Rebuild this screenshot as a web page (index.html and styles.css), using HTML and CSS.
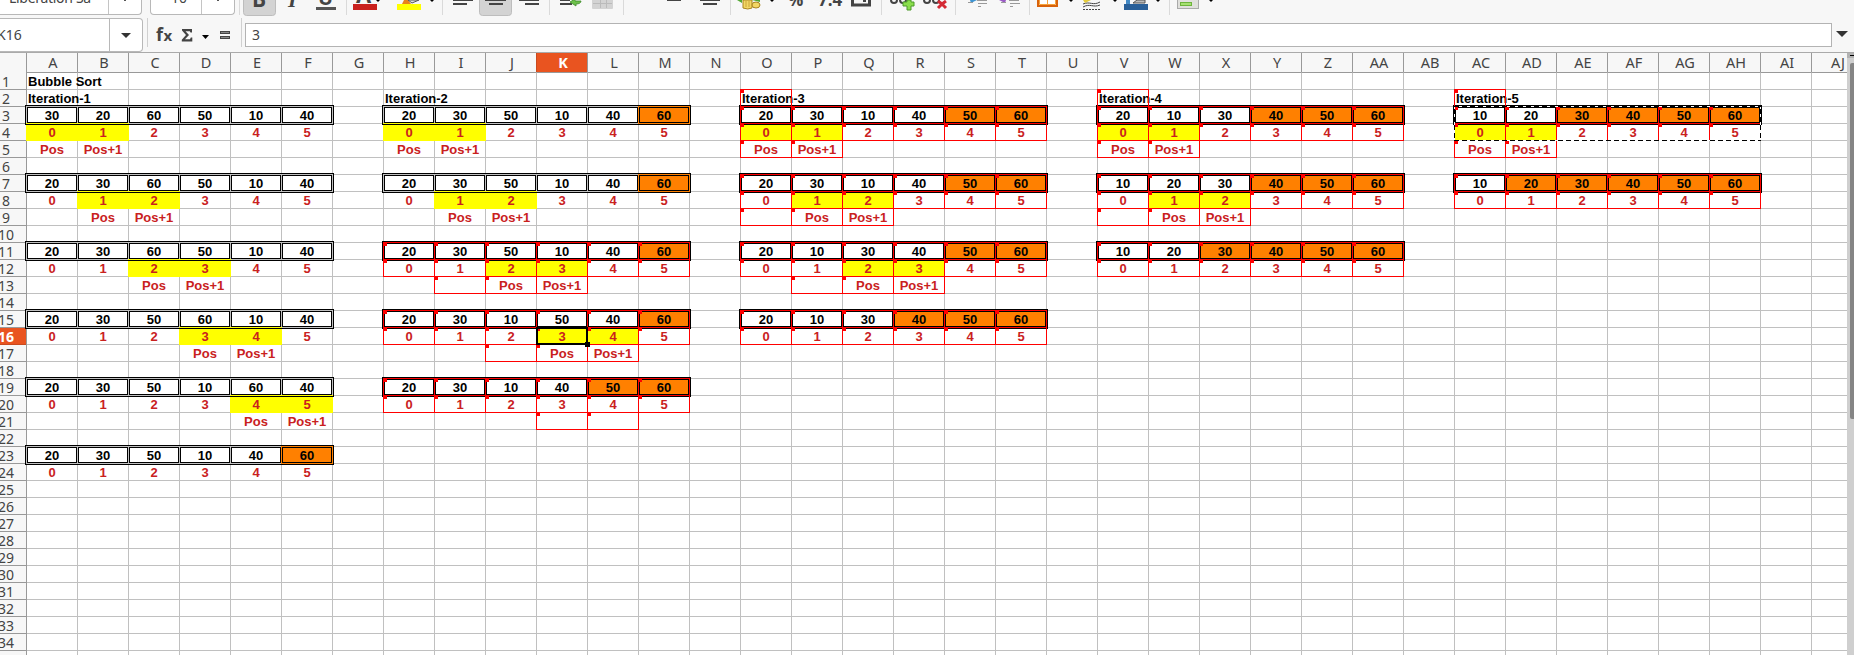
FILE: index.html
```html
<!DOCTYPE html>
<html lang="en">
<head>
<meta charset="utf-8">
<title>Bubble Sort</title>
<link rel="stylesheet" href="styles.css">
</head>
<body>
<div class="app">
  <div class="toolbar">
    <div class="combo combo-font"><span class="combo-text">Liberation Sa</span><span class="combo-arrow"></span></div>
    <div class="combo combo-size"><span class="combo-text">10</span><span class="combo-arrow"></span></div>
    <svg class="tools" width="1615" height="16" viewBox="239 0 1615 16">
      <g fill="#dadada">
        <rect x="239" y="0" width="1" height="15"/><rect x="346" y="0" width="1" height="15"/><rect x="442" y="0" width="1" height="15"/><rect x="549" y="0" width="1" height="15"/><rect x="623" y="0" width="1" height="15"/><rect x="730" y="0" width="1" height="15"/><rect x="881" y="0" width="1" height="15"/><rect x="955" y="0" width="1" height="15"/><rect x="1029" y="0" width="1" height="15"/><rect x="1169" y="0" width="1" height="15"/>
      </g>
      <g fill="#d3d3d3" stroke="#bdbdbd"><rect x="243.500" y="-9.500" width="32" height="25" rx="3"/><rect x="479.500" y="-9.500" width="32" height="25" rx="3"/></g>
      <g class="glyph">
        <text x="252" y="7" font-size="21" font-weight="700">B</text>
        <text x="288" y="7" font-size="22" font-weight="700" font-style="italic" class="serif">I</text>
        <text x="318" y="5" font-size="20" font-weight="700">U</text>
        <text x="356" y="3" font-size="22" font-weight="700">A</text>
        <text x="788" y="6" font-size="17" font-weight="700">%</text>
        <text x="818" y="6" font-size="17" font-weight="700">7.4</text>
      </g>
      <rect x="316" y="7" width="20" height="3" fill="#555"/>
      <rect x="353" y="4" width="24" height="6" fill="#c9211e"/>
      <rect x="397" y="4" width="24" height="6" fill="#ff0"/>
      <path d="M402 4l2-4h4l3 4z" fill="#e8821a"/><path d="M408 0l4 3 7-3z" fill="#ddd" stroke="#555"/>
      <g fill="#000"><path d="M376 0h4l-2 2z"/><path d="M430 0h4l-2 2z"/><path d="M770 0h4l-2 2z"/><path d="M1069 0h4l-2 2z"/><path d="M1113 0h4l-2 2z"/><path d="M1156 0h4l-2 2z"/><path d="M1209 0h4l-2 2z"/></g>
      <g fill="#444">
        <rect x="453" y="0" width="20" height="1"/><rect x="453" y="3" width="14" height="2"/>
        <rect x="485" y="0" width="21" height="1"/><rect x="489" y="3" width="14" height="2"/>
        <rect x="519" y="0" width="20" height="1"/><rect x="525" y="3" width="14" height="2"/>
        <rect x="560" y="0" width="10" height="1"/><rect x="560" y="3" width="12" height="2"/>
        <rect x="667" y="0" width="14" height="1"/>
        <rect x="700" y="0" width="20" height="1"/><rect x="703" y="3" width="14" height="2"/>
      </g>
      <path d="M570 2l5-3v2h6c0 2-2 3-5 3v2z" fill="#6cc04a" stroke="#3d8a2a" stroke-width=".8"/>
      <rect x="592" y="-6" width="21" height="15" rx="1" fill="#d3d3d3"/><path d="M593 3.500h19M600.500 0v8M606.500 0v8" stroke="#bbb" fill="none"/>
      <path d="M737 0h5v3zM752 0h8v2z" fill="#53a833"/>
      <path d="M743 0h9v8q-4 2-9 0z" fill="#f3d765" stroke="#a98420"/><path d="M746 1v6M749 1v6" stroke="#c9a63a"/><ellipse cx="756" cy="5" rx="4" ry="3" fill="#f3d765" stroke="#a98420"/>
      <path d="M852.500-8v13h17V-8" fill="none" stroke="#444" stroke-width="3"/><rect x="863" y="0" width="3" height="2" fill="#444"/>
      <g fill="none" stroke="#444" stroke-width="2"><circle cx="894" cy="0" r="3"/><circle cx="903" cy="0" r="3"/><circle cx="927" cy="0" r="3"/><circle cx="936" cy="0" r="3"/></g>
      <path d="M907 0h4v2h3v4h-3v4h-4V6h-4V2h4z" fill="#8ade4c" stroke="#4c9a2a"/>
      <path d="M938 1l4 3 4-3M938 8l4-4 4 4" fill="none" stroke="#d42a35" stroke-width="3"/>
      <path d="M970 0h7l-6 3z" fill="#3f94d1"/><path d="M999 0h7l-1 3z" fill="#9a5bc4"/>
      <path d="M977 .5h10M968 2.500h5M978 3.500h9M978 6.500h3M1009 .5h10M1001 2.500h5M1010 3.500h10M1010 6.500h3" stroke="#999" fill="none"/>
      <rect x="1038" y="-10" width="19" height="16" fill="#fff" stroke="#d9620b" stroke-width="2"/><path d="M1047.500 0v4M1039.500 0v4.500h16V0" stroke="#f4a23c" fill="none"/>
      <path d="M1083 4c7-3 10 2 17-2M1083 7c7-4 10 1 17-2" stroke="#444" fill="none"/><path d="M1083 9.500h17" stroke="#444" stroke-dasharray="2 1"/><path d="M1083 0h8l-6 3z" fill="#e5cc3c"/>
      <rect x="1124" y="4" width="24" height="6" fill="#2a6099"/><path d="M1126 0h4v4h-4z" fill="#438ac6"/><path d="M1133 3l4-3h8v3z" fill="#bbb" stroke="#555"/>
      <rect x="1177.500" y="-8.500" width="21" height="17" fill="#e0e0dc" stroke="#aaa"/><rect x="1180.500" y="2.500" width="11" height="3" fill="#a5e070" stroke="#6db43b"/>
    </svg>
  </div>
  <div class="formula-bar">
    <div class="name-box"><span class="name-text">K16</span><span class="name-drop"><i class="tri"></i></span></div>
    <i class="sep"></i>
    <svg class="fx-icons" width="94" height="30" viewBox="148 18 94 30">
      <g class="glyph"><text x="156" y="41" font-size="18" font-weight="700">f</text><text x="163.500" y="41" font-size="15" font-weight="700">x</text></g>
      <path d="M182 29h10v3.500h-1.500l-.7-1.300h-4.300l3.500 3.800-4 4.200h5l.8-1.700h1.500v4h-10.500v-1.700l4.200-4.800-4-4.500z" fill="#444"/>
      <path d="M202 35h7l-3.500 4z" fill="#000"/>
      <g fill="#888" stroke="#444"><rect x="220.500" y="31.500" width="9" height="2"/><rect x="220.500" y="36.500" width="9" height="2"/></g>
    </svg>
    <i class="sep"></i>
    <div class="formula-input">3</div>
    <i class="tri tri-expand"></i>
  </div>
  <div class="sheet">
    <div class="sheet-main">
      <div class="col-heads" id="colHeads"></div>
      <div class="sheet-body">
        <div class="row-heads" id="rowHeads"></div>
        <div class="cells" id="cells"></div>
      </div>
    </div>
    <div class="scrollbar"><div class="scroll-cap"></div><div class="scroll-thumb"></div></div>
  </div>
</div>
<script src="sheet.js"></script>
</body>
</html>
```

FILE: styles.css
```css
* { box-sizing: border-box; }
body { margin: 0; background: #f7f7f7; font-family: "Noto Sans", "Open Sans", sans-serif; color: #444; }
.app { width: 1854px; height: 655px; overflow: hidden; display: flex; flex-direction: column; }

.toolbar { height: 16px; flex: none; display: flex; overflow: hidden; }
.tools { display: block; flex: none; }
.glyph { fill: #444; font-family: "Open Sans", sans-serif; }
.serif { font-family: "Liberation Serif", serif; }
.combo { height: 15px; border: 1px solid #b8b8b8; border-top: 0; background: #fff; display: flex; justify-content: space-between; flex: none; }
.combo-font { width: 142px; border-left: 0; border-radius: 0 0 4px 0; padding-left: 9px; }
.combo-size { width: 85px; margin: 0 4px 0 8px; border-radius: 0 0 4px 4px; padding-left: 20px; }
.combo-text { font-size: 14px; line-height: 20px; margin-top: -12px; white-space: nowrap; }
.combo-font .combo-text { letter-spacing: -.3px; }
.combo-arrow { width: 33px; border-left: 1px solid #c4c4c4; }
.combo-arrow::before { content: ""; display: block; width: 2px; height: 1px; margin-left: 15px; background: #555; }

.formula-bar { height: 36px; flex: none; display: flex; align-items: flex-start; padding-top: 2px; }
.name-box { width: 143px; height: 34px; border: 1px solid #b8b8b8; border-left: 0; border-radius: 0 4px 4px 0; background: #fff; display: flex; justify-content: space-between; overflow: hidden; }
.name-text { font-size: 14px; line-height: 32px; margin-left: -3px; }
.name-drop { width: 33px; border-left: 1px solid #b8b8b8; display: flex; align-items: center; justify-content: center; }
.tri { border: 5px solid transparent; border-top-color: #333; border-bottom: 0; }
.sep { width: 1px; height: 29px; background: #d0d0d0; margin-left: 4px; }
.fx-icons + .sep { margin-left: -1px; }
.formula-input { width: 1587px; height: 24px; margin: 5px 0 0 3px; border: 1px solid #b3b3b3; background: #fff; padding-left: 6px; font-size: 14px; line-height: 22px; }
.tri-expand { margin: 13px 0 0 4px; border-width: 6px 6px 0; }

.sheet { height: 603px; display: flex; }
.sheet-main { width: 1847px; overflow: hidden; background: #fff; }
.col-heads { display: flex; height: 21px; padding-left: 26px; width: 1862px; background: #f7f7f7; border-top: 1px solid #aaa; border-bottom: 1px solid #999; }
.col-head { width: 51px; flex: none; border-left: 1px solid #999; font-size: 14.5px; line-height: 19px; text-align: center; padding-left: 2px; }
.sheet-body { display: flex; margin-top: -1px; }
.row-heads { width: 27px; flex: none; background: #f7f7f7; border-right: 1px solid #999; margin-right: -1px; padding-top: 1px; position: relative; z-index: 1; }
.row-head { height: 17px; border-bottom: 1px solid #999; font-size: 14px; line-height: 17px; display: flex; justify-content: center; padding-right: 14px; }
.is-current { background: #e95420; color: #fff; font-weight: 700; border-color: #c94a1e; }

.cells { display: grid; grid-template-columns: repeat(36, 51px); grid-auto-rows: 17px; position: relative; background: #fff; font: 700 13px/18px "Liberation Sans", Arial, sans-serif; color: #000; }
.cell { position: relative; border-left: 1px solid #c0c0c0; border-top: 1px solid #c0c0c0; text-align: center; white-space: nowrap; --line: #c0c0c0; --fill: #fff; }
.cells > .cell:nth-child(-n+36) { border-top-color: #999; }
.text { position: relative; z-index: 5; }
.title { text-align: left; padding-left: 1px; }
.index, .pos { color: #c9211e; }

/* double frame round every array value */
.value::before { content: ""; position: absolute; inset: -2px; border: 1px solid #000; z-index: 1; }
.value::after { content: ""; position: absolute; inset: 0; border: 1px solid #000; background: var(--fill); box-shadow: 0 0 0 1px var(--line); z-index: 2; }
.sorted { --fill: #ff8000; --line: #ff8000; }

.active::before { content: ""; position: absolute; inset: -1px; background: linear-gradient(#ff0 0 1px, #000 1px 2px, #ff0 2px); z-index: 3; }

/* precedent trace outline with its corner marker */
.traced { --line: #f00; }
.trace { position: absolute; inset: -1px; border: 1px solid #f00; z-index: 4; }
.marked .trace::before { content: ""; position: absolute; left: -1px; top: -1px; width: 4px; height: 4px; background: #f00; }
.title .trace { z-index: 6; }

.cursor { position: absolute; left: 510px; top: 255px; width: 52px; height: 18px; border: 2px solid #000; z-index: 8; }
.cursor::after { content: ""; position: absolute; right: -4px; bottom: -4px; width: 5px; height: 5px; background: #000; }
.copy-range { position: absolute; left: 1428px; top: 34px; width: 307px; height: 35px; z-index: 7;
  background:
    repeating-linear-gradient(90deg, #000 0 5px, #fff 5px 8px) 0 0 / 100% 1px no-repeat,
    repeating-linear-gradient(90deg, #000 0 5px, #fff 5px 8px) 0 100% / 100% 1px no-repeat,
    repeating-linear-gradient(#fff 0 3px, #000 3px 8px) 0 0 / 1px 100% no-repeat,
    repeating-linear-gradient(#fff 0 3px, #000 3px 8px) 100% 0 / 1px 100% no-repeat; }

.scrollbar { width: 7px; background: #cfcfcf; padding-left: 3px; }
.scroll-cap { height: 6px; margin-left: -3px; background: #b3b3b3; border-top: 1px solid #aaa; display: flex; align-items: center; }
.scroll-cap::after { content: ""; height: 1px; width: 4px; margin-left: 3px; background: #000; }
.scroll-thumb { margin-top: 5px; height: 356px; background: #858585; border-radius: 2px 0 0 2px; }
```

FILE: sheet.js
```js
const COLS = 36, ROWS = 35;
const colName = c => (c >= 26 ? 'A' : '') + String.fromCharCode(65 + c % 26);

// Each step: row, values, sorted tail length, active pair start (-1: none),
// traced flag, offsets of the outlined label cells, offsets of those with a marker
const blocks = [
  { col: 0, title: 'Iteration-1', steps: [
    [3, '30 20 60 50 10 40', 0, 0], [7, '20 30 60 50 10 40', 0, 1], [11, '20 30 60 50 10 40', 0, 2],
    [15, '20 30 50 60 10 40', 0, 3], [19, '20 30 50 10 60 40', 0, 4], [23, '20 30 50 10 40 60', 1, -1]] },
  { col: 7, title: 'Iteration-2', steps: [
    [3, '20 30 50 10 40 60', 1, 0], [7, '20 30 50 10 40 60', 1, 1],
    [11, '20 30 50 10 40 60', 1, 2, true, [1, 2, 3], [1, 2]],
    [15, '20 30 10 50 40 60', 1, 3, true, [2, 3, 4], [2, 3]],
    [19, '20 30 10 40 50 60', 2, -1, true, [3, 4], [3, 4]]] },
  { col: 14, title: 'Iteration-3', traced: true, steps: [
    [3, '20 30 10 40 50 60', 2, 0, true, [0, 1], [0, 1]],
    [7, '20 30 10 40 50 60', 2, 1, true, [0, 1, 2], [0, 1]],
    [11, '20 10 30 40 50 60', 2, 2, true, [1, 2, 3], [1, 2]],
    [15, '20 10 30 40 50 60', 3, -1, true]] },
  { col: 21, title: 'Iteration-4', traced: true, steps: [
    [3, '20 10 30 40 50 60', 3, 0, true, [0, 1], [0, 1]],
    [7, '10 20 30 40 50 60', 3, 1, true, [0, 1, 2], [0, 1]],
    [11, '10 20 30 40 50 60', 4, -1, true]] },
  { col: 28, title: 'Iteration-5', traced: true, steps: [
    [3, '10 20 30 40 50 60', 4, 0, true, [0, 1], [0, 1]],
    [7, '10 20 30 40 50 60', 5, -1, true]] }
];

const model = {};
const put = (row, col, cls, text) => { model[row + ',' + col] = { cls, text }; };
put(1, 0, 'title', 'Bubble Sort');
for (const b of blocks) {
  put(2, b.col, 'title' + (b.traced ? ' traced marked' : ''), b.title);
  for (const [row, list, tail, pair, traced, boxes = [], marks = []] of b.steps) {
    const t = traced ? ' traced marked' : '';
    list.split(' ').forEach((v, i) => {
      put(row, b.col + i, 'value' + (i >= 6 - tail ? ' sorted' : '') + t, v);
      put(row + 1, b.col + i, 'index' + (pair >= 0 && (i === pair || i === pair + 1) ? ' active' : '') + t, i);
    });
    for (const i of boxes) put(row + 2, b.col + i, 'pos traced' + (marks.includes(i) ? ' marked' : ''), '');
    if (pair >= 0) ['Pos', 'Pos+1'].forEach((label, k) => {
      const key = (row + 2) + ',' + (b.col + pair + k);
      model[key] = { cls: model[key] ? model[key].cls : 'pos', text: label };
    });
  }
}

let heads = '', rows = '', cells = '';
for (let c = 0; c < COLS; c++) heads += `<div class="col-head${c === 10 ? ' is-current' : ''}">${colName(c)}</div>`;
for (let r = 1; r <= ROWS; r++) {
  rows += `<div class="row-head${r === 16 ? ' is-current' : ''}">${r < ROWS ? r : ''}</div>`;
  for (let c = 0; c < COLS; c++) {
    const m = model[r + ',' + c];
    cells += m
      ? `<div class="cell ${m.cls}">${m.cls.includes('traced') ? '<i class="trace"></i>' : ''}<span class="text">${m.text}</span></div>`
      : '<div class="cell"></div>';
  }
}
document.getElementById('colHeads').innerHTML = heads;
document.getElementById('rowHeads').innerHTML = rows;
document.getElementById('cells').innerHTML = cells + '<div class="cursor"></div><div class="copy-range"></div>';
```
